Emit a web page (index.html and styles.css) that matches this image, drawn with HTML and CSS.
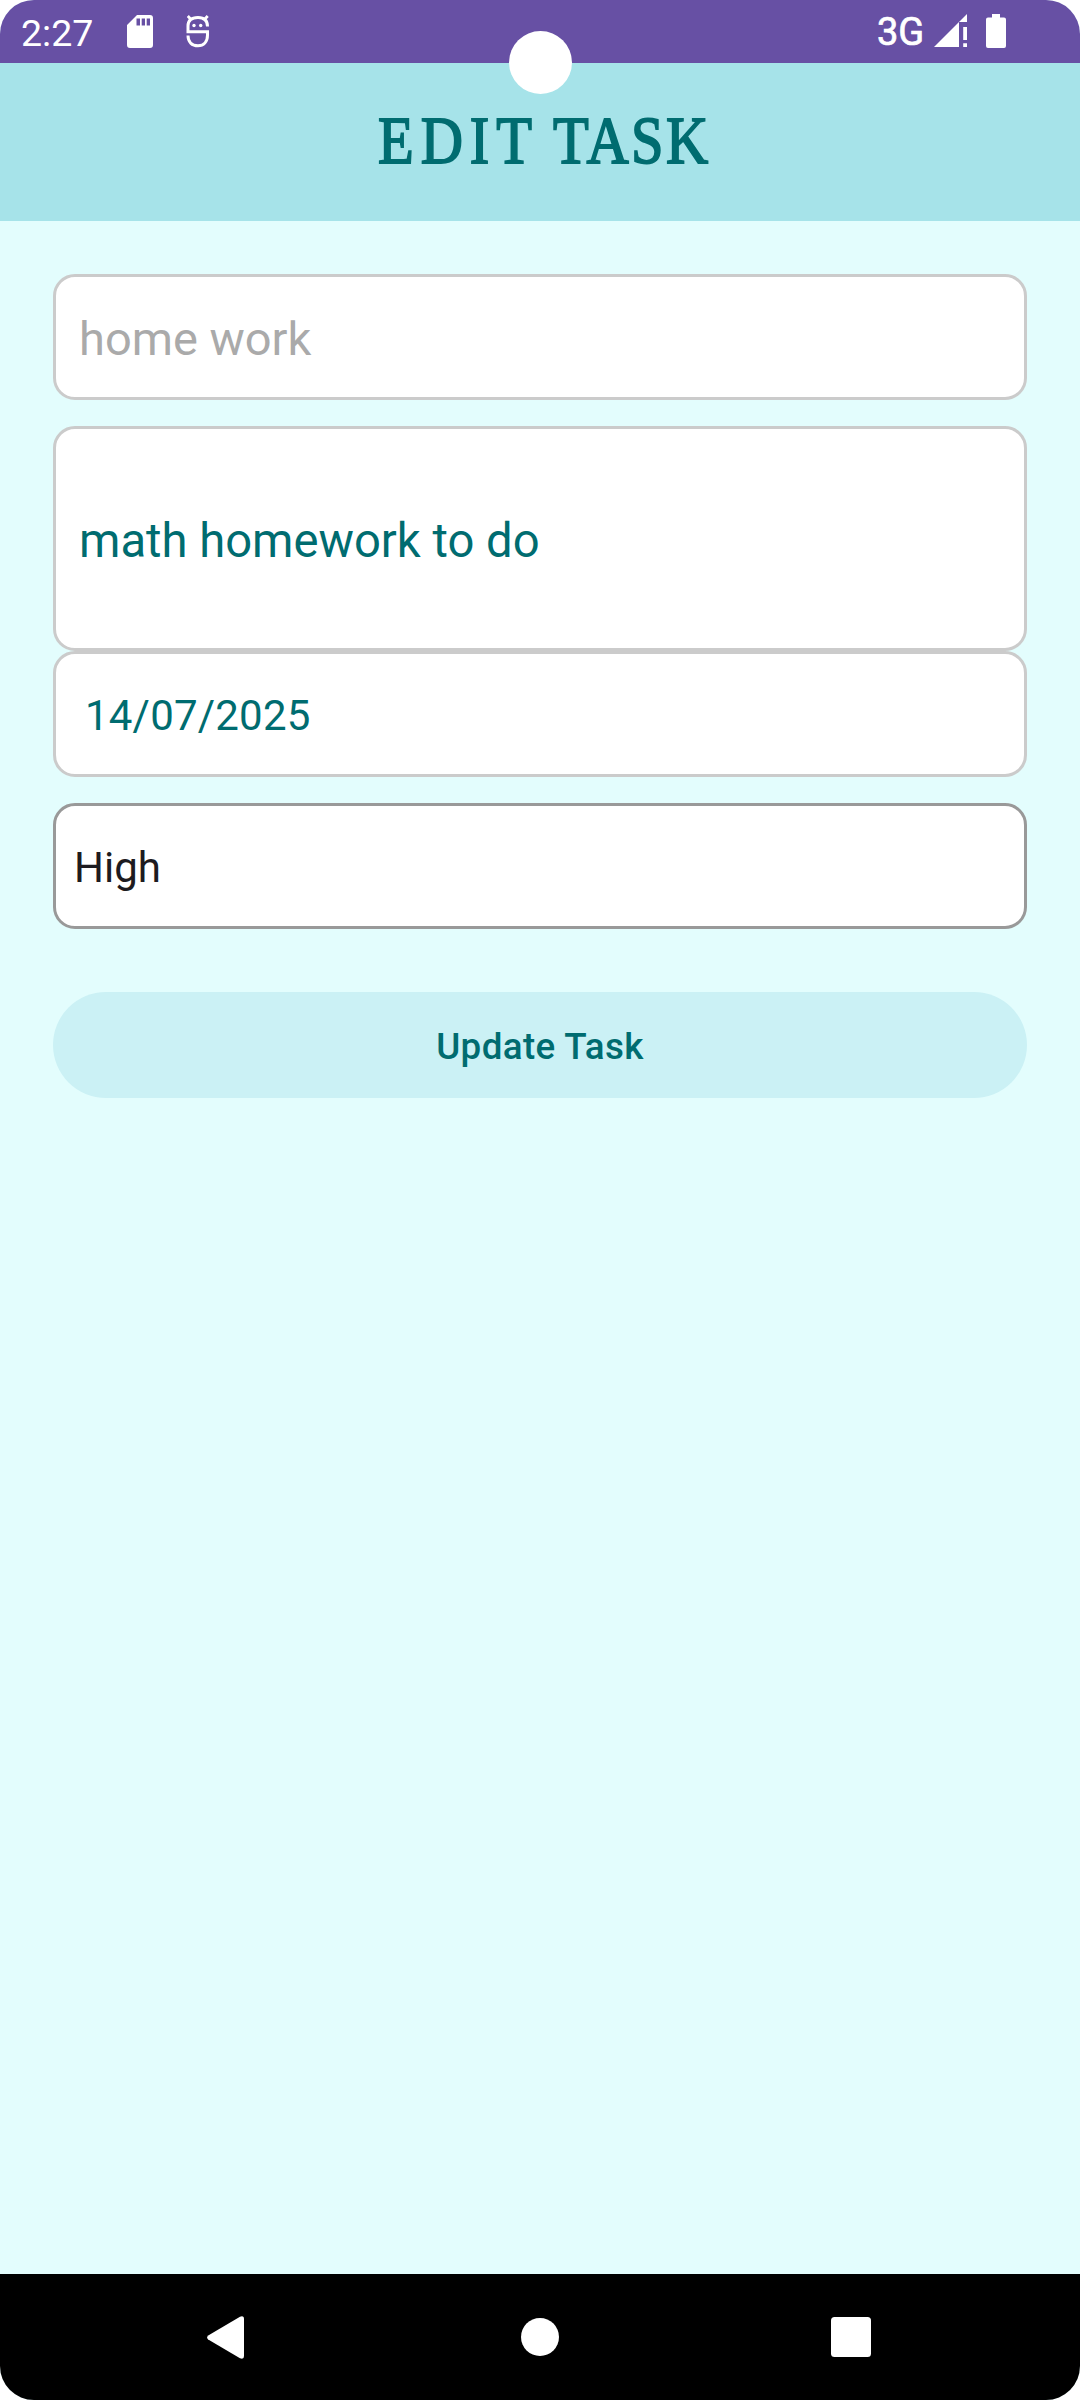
FILE: index.html
```html
<!DOCTYPE html>
<html lang="en">
<head>
<meta charset="utf-8">
<title>Edit Task</title>
<link rel="stylesheet" href="styles.css">
</head>
<body>
<div class="screen">
  <div class="status">
    <span class="time">2:27</span>
    <svg class="sd" width="26" height="33" viewBox="0 0 26 33"><path fill="#fff" fill-rule="evenodd" d="M10 0H23Q26 0 26 3V30Q26 33 23 33H3Q0 33 0 30V10ZM9.500 3.500V10.500H13V3.500ZM14.700 3.500V10.500H18V3.500ZM19.700 3.500V10.500H23V3.500Z"/></svg>
    <svg class="debug" width="26" height="34" viewBox="0 0 26 34"><g fill="none" stroke="#fff" stroke-width="3"><path d="M22.500 12.500C22.500 6 19 3.500 13 3.500S3 6 3 12V17.800H22.500V21C22.500 28 18.500 31.800 13 31.800C7 31.800 3 28 3 21.500"/><path d="M2.800 2L6 5.500M22.700 2L19.500 5.500" stroke-width="2.800"/></g><circle cx="9" cy="11.500" r="1.700" fill="#fff"/><circle cx="15.700" cy="11.500" r="1.700" fill="#fff"/></svg>
    <span class="network">3G</span>
    <svg class="signal" width="34" height="34" viewBox="0 0 34 34" fill="#fff"><path d="M0 33L33 0V8H25V33Z"/><path d="M29.200 13H33V26H29.200ZM29.200 29.300H33V33H29.200Z"/></svg>
    <svg class="battery" width="20" height="34" viewBox="0 0 20 34"><path fill="#fff" d="M6 0H14V3.500H18Q20 3.500 20 5.500V32Q20 34 18 34H2Q0 34 0 32V5.500Q0 3.500 2 3.500H6Z"/></svg>
    <div class="camera"></div>
  </div>
  <header class="header"><h1 class="title"><span class="wide">EDIT</span> TASK</h1></header>
  <main class="form">
    <div class="field name">home work</div>
    <div class="field description">math homework to do</div>
    <div class="field date">14/07/2025</div>
    <div class="field priority">High</div>
    <button class="update" type="button">Update Task</button>
  </main>
  <nav class="nav">
    <svg width="37" height="43" viewBox="0 0 37 43"><path fill="#fff" d="M1.200 19.600L33 .7Q37 -.8 37 3V40Q37 43.800 33 42.300L1.200 23.400Q-1 21.500 1.200 19.600Z"/></svg>
    <svg class="home" width="38" height="38" viewBox="0 0 38 38"><circle cx="19" cy="19" r="19" fill="#fff"/></svg>
    <svg width="40" height="40" viewBox="0 0 40 40"><rect width="40" height="40" rx="3.500" fill="#fff"/></svg>
  </nav>
</div>
</body>
</html>
```
FILE: styles.css
```css
* { box-sizing: border-box; }
body { margin: 0; background: #fff; font-family: Roboto, sans-serif; }
.screen {
  width: 1080px;
  height: 2400px;
  display: flex;
  flex-direction: column;
  overflow: hidden;
  border-radius: 34px;
  background: #e3fdfd;
}
.status {
  position: relative;
  height: 63px;
  display: flex;
  align-items: flex-start;
  padding-left: 21px;
  background: #6750a4;
  color: #fff;
}
.time { width: 106px; padding-top: 12px; font-size: 37.5px; line-height: 43px; }
.sd { margin-top: 15px; }
.debug { margin: 14px 0 0 32px; }
.network {
  width: 57px;
  margin: 11px 0 0 666px;
  font-size: 38px;
  line-height: 43px;
  -webkit-text-stroke: .7px #fff;
}
.signal { margin-top: 14px; }
.battery { margin: 14px 0 0 18px; }
.camera {
  position: absolute;
  left: 509px;
  top: 31px;
  width: 63px;
  height: 63px;
  border-radius: 50%;
  background: #fff;
}
.header {
  height: 158px;
  display: flex;
  justify-content: center;
  padding: 37px 0 0 9px;
  background: #a6e3e9;
}
.title {
  margin: 0;
  font: 400 68px/80px "Liberation Serif", serif;
  letter-spacing: 2.8px;
  word-spacing: -2px;
  color: #006c70;
  white-space: nowrap;
  transform: scaleX(.86);
  -webkit-text-stroke: 1.8px #006c70;
}
.wide { letter-spacing: 8px; }
.form { flex: 1; display: flex; flex-direction: column; padding: 53px 53px 0; }
.field {
  height: 126px;
  display: flex;
  align-items: center;
  border: 3px solid #cbcbcb;
  border-radius: 22px;
  background: #fff;
  color: #006c70;
  font-size: 42px;
}
.name { padding: 2px 0 0 23px; font-size: 47px; color: #aaa; }
.description { height: 225px; margin-top: 26px; padding: 4px 0 0 23px; font-size: 47.200px; }
.date { padding: 2px 0 0 29px; letter-spacing: .2px; }
.priority { margin-top: 26px; padding: 2px 0 0 18px; border-color: #999; color: #1d1b20; }
.update {
  height: 106px;
  margin-top: 63px;
  padding: 2px 0 0;
  border: 0;
  border-radius: 53px;
  background: #cbf1f5;
  color: #006c70;
  font: 500 36.750px/43px Roboto, sans-serif;
  letter-spacing: .4px;
}
.nav {
  height: 126px;
  display: flex;
  align-items: center;
  justify-content: space-between;
  padding: 0 209px 0 207px;
  background: #000;
}
.home { margin-left: 5px; }
```
